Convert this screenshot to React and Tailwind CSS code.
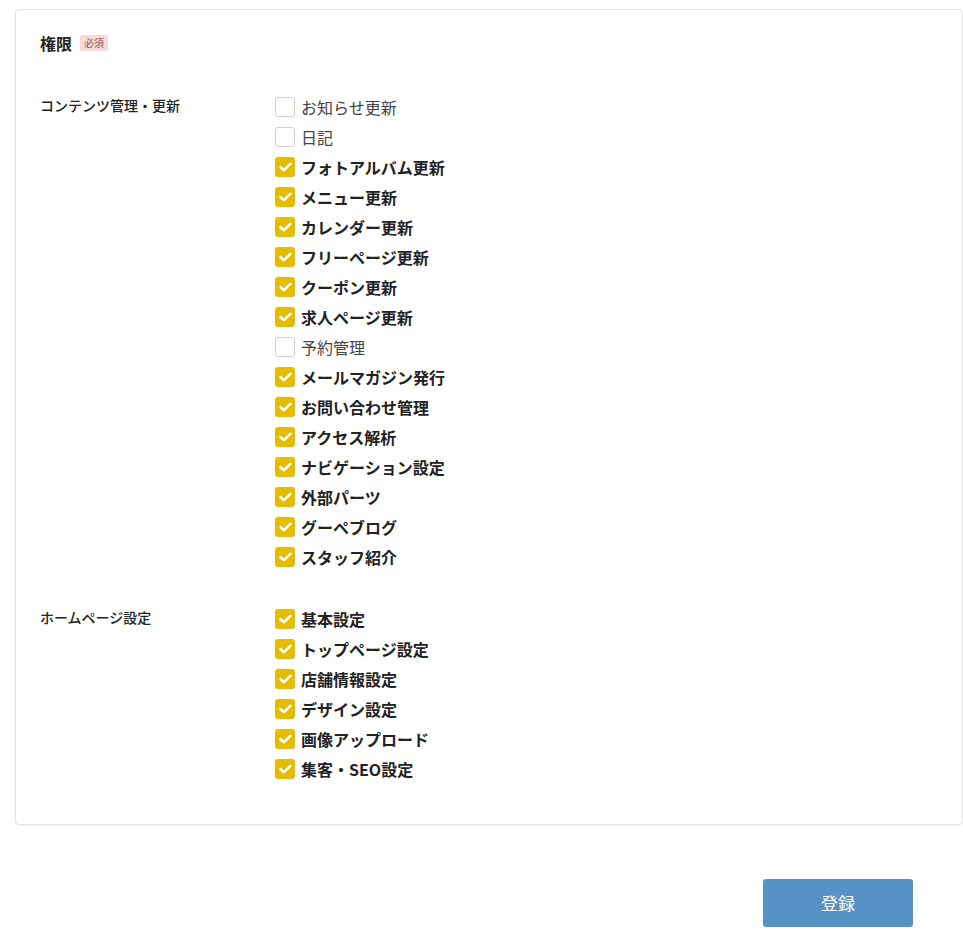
import React from 'react';

const contents = [
    ['お知らせ更新', false],
    ['日記', false],
    ['フォトアルバム更新', true],
    ['メニュー更新', true],
    ['カレンダー更新', true],
    ['フリーページ更新', true],
    ['クーポン更新', true],
    ['求人ページ更新', true],
    ['予約管理', false],
    ['メールマガジン発行', true],
    ['お問い合わせ管理', true],
    ['アクセス解析', true],
    ['ナビゲーション設定', true],
    ['外部パーツ', true],
    ['グーペブログ', true],
    ['スタッフ紹介', true],
];

const homepage = [
    ['基本設定', true],
    ['トップページ設定', true],
    ['店舗情報設定', true],
    ['デザイン設定', true],
    ['画像アップロード', true],
    ['集客・SEO設定', true],
];

const CheckItem = ({ label, checked }) => (
    <label className="flex items-center h-[30px] cursor-pointer">
        {checked ? (
            <span className="w-5 h-5 rounded-[3px] bg-[#e5bd00] flex items-center justify-center shrink-0">
                <svg width="13" height="10" viewBox="0 0 13 10" fill="none">
                    <path d="M1.6 5.2 L5 8.2 L11.4 1.8" stroke="white" strokeWidth="2.6" strokeLinecap="round" strokeLinejoin="round" />
                </svg>
            </span>
        ) : (
            <span className="w-5 h-5 rounded-[3px] border border-[#cfcfcf] bg-white shrink-0" />
        )}
        <span className={`ml-[6px] text-[16px] leading-none ${checked ? 'font-bold text-[#222]' : 'text-[#444]'}`}>
            {label}
        </span>
    </label>
);

const Section = ({ title, items }) => (
    <div className="flex">
        <div className="w-[235px] shrink-0 pt-[3px] text-[14px] font-medium text-[#222] leading-5">{title}</div>
        <div className="flex flex-col">
            {items.map(([label, checked]) => (
                <CheckItem key={label} label={label} checked={checked} />
            ))}
        </div>
    </div>
);

export default function App() {
    return (
        <div className="min-h-screen bg-white pt-[9px] font-['Noto_Sans_CJK_JP','Noto_Sans',sans-serif]">
            <div className="ml-[15px] border border-[#e2e2e2] rounded-[4px] shadow-[0_1px_2px_rgba(0,0,0,0.06)] pt-[23px] pl-[24px] pb-[40px]">
                <div className="flex items-center h-5">
                    <span className="text-[16px] font-bold text-[#222]">権限</span>
                    <span className="ml-[8px] h-4 px-[4px] rounded-[2px] bg-[#f7d9d9] text-[#a0524f] text-[10px] leading-4">必須</span>
                </div>
                <div className="mt-[39px] flex flex-col gap-[32px]">
                    <Section title="コンテンツ管理・更新" items={contents} />
                    <Section title="ホームページ設定" items={homepage} />
                </div>
            </div>
            <div className="flex justify-end pr-[50px] mt-[54px]">
                <button className="w-[150px] h-12 rounded-[3px] bg-[#5792c6] text-white text-[17px]">登録</button>
            </div>
        </div>
    );
}
